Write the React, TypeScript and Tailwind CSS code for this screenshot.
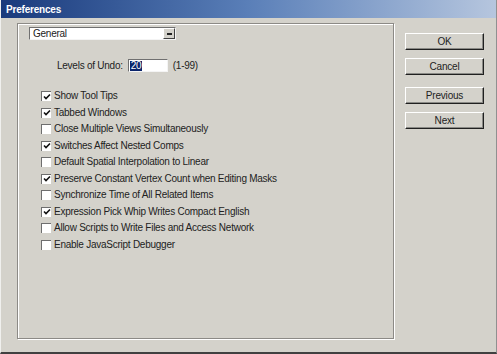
const options = [
  { label: "Show Tool Tips", checked: true },
  { label: "Tabbed Windows", checked: true },
  { label: "Close Multiple Views Simultaneously", checked: false },
  { label: "Switches Affect Nested Comps", checked: true },
  { label: "Default Spatial Interpolation to Linear", checked: false },
  { label: "Preserve Constant Vertex Count when Editing Masks", checked: true },
  { label: "Synchronize Time of All Related Items", checked: false },
  { label: "Expression Pick Whip Writes Compact English", checked: true },
  { label: "Allow Scripts to Write Files and Access Network", checked: false },
  { label: "Enable JavaScript Debugger", checked: false },
];

const Checkbox = ({ checked }: { checked: boolean }) => (
  <div className="w-[10px] h-[10px] bg-white border-t border-l border-[#6e6e6e] border-r-[#e8e8e8] border-b-[#e8e8e8] flex items-center justify-center shrink-0">
    {checked && (
      <svg width="8" height="8" viewBox="0 0 8 8">
        <path d="M1 3.5 L3 5.5 L7 1.5" stroke="#111" strokeWidth="1.6" fill="none" />
      </svg>
    )}
  </div>
);

const WinButton = ({ label }: { label: string }) => (
  <button className="w-[79px] h-[17px] bg-[#d4d2cb] border border-t-white border-l-white border-r-[#202020] border-b-[#202020] shadow-[inset_-1px_-1px_0_#8a8a86] text-[10px] text-[#222] leading-none flex items-center justify-center tracking-[-0.2px]">
    {label}
  </button>
);

export default function App() {
  return (
    <div className="w-[497px] h-[354px] bg-[#d4d2cb] flex flex-col border-b-2 border-[#404040] border-l border-l-[#f0f0ee] border-r border-r-[#909090] overflow-hidden text-[#222]" style={{ fontFamily: "'Liberation Sans', Arial, sans-serif" }}>
      <div className="h-[18px] bg-gradient-to-r from-[#1a3a7c] via-[#5a7fb8] to-[#b6c6de] flex items-center pl-[5px]">
        <span className="text-white font-bold text-[10px] tracking-[-0.2px]">Preferences</span>
      </div>
      <div className="flex flex-1">
        <div className="ml-[16px] mt-[5px] w-[377px] h-[316px] border border-[#8c8a86] shadow-[1px_1px_0_#fff,inset_1px_1px_0_#fff] pl-[11px] pt-[3px]">
          <div className="w-[147px] h-[13px] bg-white border border-t-[#707070] border-l-[#707070] border-r-[#f4f4f4] border-b-[#f4f4f4] flex items-center justify-between">
            <span className="text-[10px] pl-[3px] leading-none tracking-[-0.25px]">General</span>
            <div className="w-[12px] h-[11px] bg-[#d4d2cb] border border-t-white border-l-white border-r-[#404040] border-b-[#404040] flex items-center justify-center">
              <div className="w-[5px] h-[2px] bg-[#222]" />
            </div>
          </div>
          <div className="flex items-center mt-[18px] ml-[28px] text-[10px] tracking-[-0.25px]">
            <span>Levels of Undo:</span>
            <div className="ml-[5px] w-[40px] h-[13px] bg-white border border-t-[#707070] border-l-[#707070] border-r-[#f4f4f4] border-b-[#f4f4f4] flex items-center pl-[1px]">
              <span className="bg-[#0a246a] text-white leading-none px-[1px]">20</span>
            </div>
            <span className="ml-[5px]">(1-99)</span>
          </div>
          <div className="flex flex-col mt-[15px] ml-[12px]">
            {options.map((o) => (
              <div key={o.label} className="flex items-center h-[16.5px] gap-[3px]">
                <Checkbox checked={o.checked} />
                <span className="text-[10px] leading-none tracking-[-0.25px] whitespace-nowrap">{o.label}</span>
              </div>
            ))}
          </div>
        </div>
        <div className="ml-[11px] mt-[15px] flex flex-col">
          <WinButton label="OK" />
          <div className="mt-[8px]"><WinButton label="Cancel" /></div>
          <div className="mt-[12px]"><WinButton label="Previous" /></div>
          <div className="mt-[8px]"><WinButton label="Next" /></div>
        </div>
      </div>
    </div>
  );
}
